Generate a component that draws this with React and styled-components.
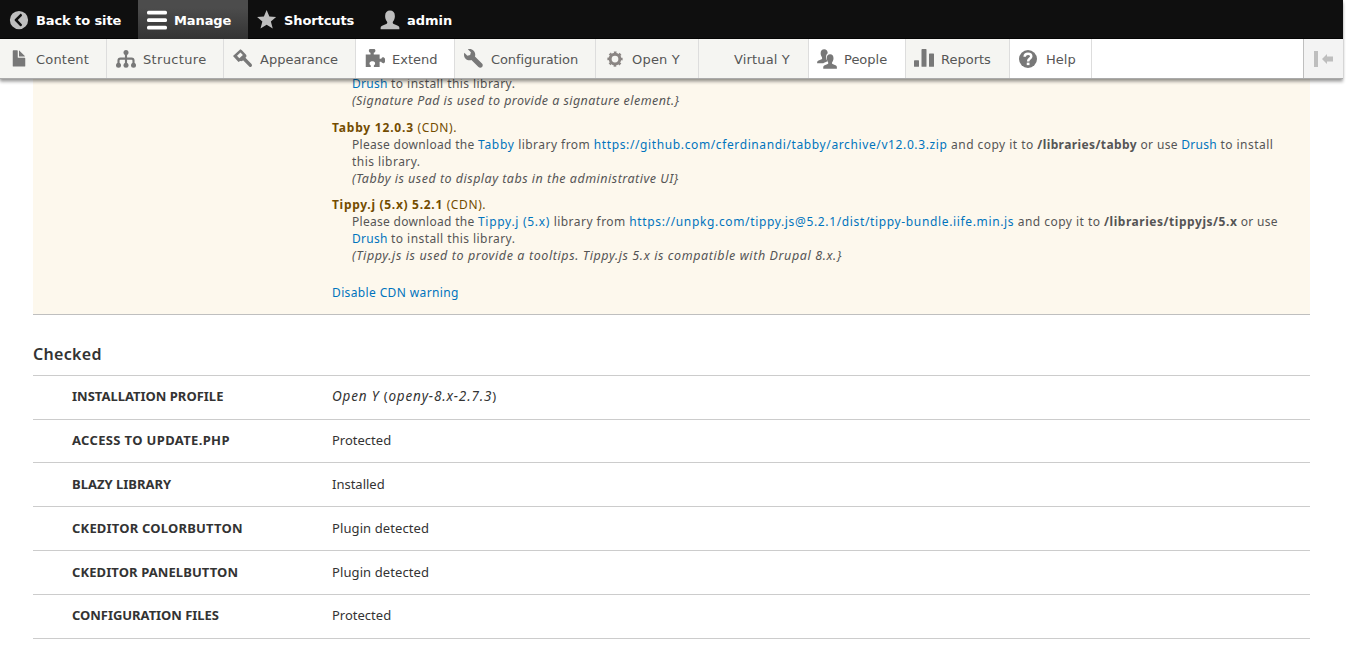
import React from 'react';
import styled, { createGlobalStyle } from 'styled-components';

const Global = createGlobalStyle`
  * { box-sizing: border-box; }
  html, body { margin: 0; height: 100%; overflow: hidden; background: #fff; }
`;

const Page = styled.div`
  width: 1343px;
  height: 654px;
  font-family: 'Noto Sans', sans-serif;
  color: #333;
`;

const Toolbar = styled.header`
  position: relative;
  z-index: 2;
  box-shadow: -1px 0 3px rgba(0, 0, 0, 0.3), 0 3px 3px rgba(0, 0, 0, 0.3);
  font: 13px/20px 'DejaVu Sans', Verdana, sans-serif;
`;

const Bar = styled.nav`
  display: flex;
  height: 39px;
  background: #0f0f0f;
  border-bottom: 1px solid #050505;
`;

const Caption = styled.span`
  padding-top: 2px;
`;

const BarTab = styled.a`
  display: flex;
  align-items: center;
  gap: 7px;
  width: ${(p) => p.$w}px;
  height: 39px;
  padding-left: 9px;
  color: #fff;
  font-weight: bold;
  letter-spacing: ${(p) => p.$ls || 0}px;
  white-space: nowrap;
  background: ${(p) => (p.$active ? 'linear-gradient(#4c4c4c 20%, #333)' : 'none')};
`;

const Tray = styled.nav`
  display: flex;
  height: 40px;
  background: #fff;
  border-bottom: 1px solid #aaa;
`;

const TrayItem = styled.a`
  display: flex;
  align-items: center;
  gap: ${(p) => p.$gap || 7}px;
  width: ${(p) => p.$w}px;
  height: 39px;
  padding-left: ${(p) => p.$pad || 9}px;
  color: #565656;
  letter-spacing: ${(p) => p.$ls || 0}px;
  white-space: nowrap;
  background: ${(p) => (p.$plain ? '#fff' : '#f5f5f2')};
  border-right: 1px solid #ddd;
`;

const Toggle = styled.button`
  display: flex;
  align-items: center;
  justify-content: center;
  width: 40px;
  height: 39px;
  margin-left: auto;
  padding: 0 2px 0 0;
  border: 0;
  border-left: 1px solid #bfbfbf;
  background: #f3f3f3;
`;

const Glyph = styled.svg`
  flex: none;
  width: 20px;
  height: 20px;
  fill: ${(p) => p.$fill || '#787878'};
`;

const Warning = styled.section`
  display: flow-root;
  height: 236px;
  margin: 0 33px;
  padding: 0 0 0 299px;
  background: #fdf8ed;
  border-bottom: 1px solid #bfbfbf;
  color: #555;
  font-size: 12px;
  line-height: 17px;
`;

const Library = styled.dl`
  margin: ${(p) => p.$top || 0}px 0 ${(p) => p.$bottom || 10}px;
`;

const LibraryName = styled.dt`
  height: 17px;
  color: #734c00;
  letter-spacing: 0.6px;
`;

const Line = styled.dd`
  height: 17px;
  margin: 0 0 0 20px;
  white-space: pre;
  letter-spacing: ${(p) => p.$ls || 0.46}px;
`;

const Note = styled(Line)`
  font-size: 12.5px;
  font-style: italic;
`;

const Strong = styled.b`
  letter-spacing: ${(p) => p.$ls}px;
`;

const Text = styled.span`
  letter-spacing: ${(p) => p.$ls}px;
`;

const Link = styled.a`
  color: #0074bd;
  letter-spacing: ${(p) => p.$ls || 0.25}px;
`;

const Action = styled.div`
  padding-top: 10px;
`;

const Checked = styled.section`
  margin: 0 33px;
  padding-top: 28px;
`;

const Heading = styled.h3`
  height: 33px;
  margin: 0;
  border-bottom: 1px solid #ccc;
  font-size: 16px;
  font-weight: 600;
  line-height: 23px;
  letter-spacing: 0.3px;
`;

const Row = styled.div`
  display: flex;
  align-items: center;
  height: ${(p) => p.$h}px;
  padding: 0 0 ${(p) => p.$lift || 2}px 39px;
  border-bottom: 1px solid #ccc;
  font-size: 13px;
  line-height: 18px;
`;

const Label = styled.div`
  width: 260px;
  font-weight: 700;
  white-space: nowrap;
  letter-spacing: ${(p) => p.$ls || 0}px;
`;

const Value = styled.div`
  white-space: nowrap;
  letter-spacing: ${(p) => p.$ls || 0}px;
  i { font-size: 13.5px; }
`;

const icons = {
  back: (
    <path d="M8 .7a7.3 7.3 0 1 0 0 14.6A7.3 7.3 0 0 0 8 .7zm2.2 10.6c.3.3.3.8 0 1.1l-.3.3c-.3.3-.8.3-1.1 0L4.7 8.5a.8.8 0 0 1 0-1.1l4.1-4.1c.3-.3.8-.3 1.1 0l.3.3c.3.3.3.8 0 1.1L7 8z" />
  ),
  menu: (
    <g>
      <rect y=".6" width="16" height="3" rx="1.2" />
      <rect y="6.5" width="16" height="3" rx="1.2" />
      <rect y="12.5" width="16" height="3" rx="1.2" />
    </g>
  ),
  star: <path d="M7.7 0l2.2 5.2 5.4.3-4.2 3.7 1.5 5.6-4.9-3-4.9 3 1.5-5.6L.1 5.5l5.4-.3z" />,
  user: (
    <path d="M15.5 14.2c0-1-1-1.7-4-2.8-.9-.3-1.4-.9-1.3-1.6.1-.6.8-1.2 1.1-2 .3-.6.6-1.6.6-3C11.9 1.9 10.4.4 8 .4S4.1 1.9 4.1 4.8c0 1.4.3 2.4.6 3 .3.8 1 1.4 1.1 2 .1.7-.4 1.3-1.3 1.6-3 1.1-4 1.8-4 2.8v1.1h15z" />
  ),
  file: (
    <path d="M12.502 7h-5c-.276 0-.502-.225-.502-.5v-5c0-.275-.225-.5-.5-.5h-3c-.275 0-.5.225-.5.5v12.029c0 .275.225.5.5.5h9c.275 0 .5-.225.5-.5v-6.029c0-.275-.225-.5-.498-.5zM8.502 6h4c.275 0 .34-.159.146-.354l-4.293-4.292c-.195-.195-.353-.129-.353.146v4c0 .275.225.5.5.5z" />
  ),
  tree: (
    <g>
      <circle cx="8" cy="2.8" r="2" />
      <circle cx="2" cy="13" r="2" />
      <circle cx="8" cy="13" r="2" />
      <circle cx="14" cy="13" r="2" />
      <path d="M8 3v10M2 12.5V9.2c0-1 .5-1.5 1.5-1.5h9c1 0 1.5.5 1.5 1.5v3.3" fill="none" stroke="#787878" strokeWidth="1.7" />
    </g>
  ),
  brush: (
    <g>
      <path fillRule="evenodd" d="M0 5.5L5.9.2l1.2.7 3.2 3.4c.7.8.6 1.6 0 2.3L7.9 9.2c-.7.6-1.5.6-2.2.4L4.4 10.3zM3.2 5.4l1.9 2 2.8-2.7-1.9-2z" />
      <path d="M8.8 7.8l5.1 5.2" fill="none" stroke="#787878" strokeWidth="2.6" strokeLinecap="round" />
    </g>
  ),
  puzzle: (
    <path d="M.6 4.3h3.8V3C3.4 2.7 2.9 2 3.1 1 3.2.3 3.7 0 4.3 0h2.8c.6 0 1.1.3 1.2 1 .2 1-.3 1.7-1.3 2v1.3h4.7v3.5h1.3c.5-1 1.3-1.3 2.1-1.1.6.2.9.7.9 1.3v2c0 .6-.3 1.1-.9 1.3-.8.2-1.6-.1-2.1-1.1h-1.3v4.1H7.1v-1.2c1-.5 1.1-1.4.9-2.1C7.7 10.2 7 9.800 5.900 9.800s-1.900.4-2.200 1.200c-.2.7-.1 1.600.9 2.100v1.200h-4z" />
  ),
  wrench: (
    <path d="M14.416 11.586l-.01-.008v-.001l-5.656-5.656c.15-.449.252-.921.252-1.421 0-2.485-2.016-4.5-4.502-4.5-.505 0-.981.102-1.434.255l2.431 2.431-.588 2.196-2.196.588-2.445-2.445c-.162.464-.268.956-.268 1.475 0 2.486 2.014 4.5 4.5 4.5.5 0 .972-.102 1.421-.251l5.667 5.665c.781.781 2.047.781 2.828 0s.781-2.047 0-2.828z" />
  ),
  gear: (
    <g fill="none" stroke="#8a8583">
      <circle cx="8" cy="8" r="3.9" strokeWidth="2.4" />
      <circle cx="8" cy="8" r="5.4" strokeWidth="1.4" strokeDasharray="2.12 2.12" strokeDashoffset="1.06" />
    </g>
  ),
  people: (
    <g>
      <path d="M8.1 9.2c-.8-1-.9-2.3-.8-3.4.1-1.1.6-1.9 1.3-2.4C8.5 1.3 7.4.2 5.8.2 4 .2 2.9 1.4 2.9 3.4c0 1 .2 1.7.5 2.2.3.6.7 1 .7 1.5.1.6-.2 1-.9 1.2C1 9.1.1 9.6.1 10.6v.8h5c.6-.6 1.5-1 2.9-1.5.3-.1.3-.4.1-.7z" />
      <path d="M15.9 14.4c0-.9-.8-1.4-3-2.2-.7-.2-1-.6-.9-1.2 0-.5.5-.9.7-1.5.3-.5.5-1.2.5-2.2 0-2-1-3.2-2.7-3.2S7.8 5.3 7.8 7.3c0 1 .2 1.7.5 2.2.2.6.7 1 .7 1.5.1.6-.2 1-.9 1.2-2.2.8-3.1 1.3-3.1 2.2v1.4h10.900z" />
    </g>
  ),
  chart: (
    <g>
      <rect y="9" width="4" height="5.2" rx=".5" />
      <rect x="6" y="0" width="4" height="14.2" rx=".5" />
      <rect x="12" y="3.5" width="4" height="10.7" rx=".5" />
    </g>
  ),
  help: (
    <g>
      <circle cx="8" cy="8" r="7.2" />
      <path d="M5.3 6.2C5.4 4.500 6.500 3.800 8 3.800c1.600 0 2.600.8 2.600 2.100C10.600 7.700 8.100 7.600 8.100 9.900" fill="none" stroke="#fff" strokeWidth="2" />
      <rect x="7" y="10.9" width="2.2" height="2" fill="#fff" />
    </g>
  ),
  none: null,
};

const Icon = ({ name, fill }) => (
  <Glyph viewBox="0 0 16 16" $fill={fill} aria-hidden="true">
    {icons[name]}
  </Glyph>
);

const tabs = [
  { label: 'Back to site', icon: 'back', w: 138, ls: -0.1 },
  { label: 'Manage', icon: 'menu', w: 110, active: true, ls: -0.1 },
  { label: 'Shortcuts', icon: 'star', w: 123, ls: -0.1 },
  { label: 'admin', icon: 'user', w: 100 },
];

const tray = [
  { label: 'Content', icon: 'file', w: 107, ls: 0.2 },
  { label: 'Structure', icon: 'tree', w: 117, ls: 0.35 },
  { label: 'Appearance', icon: 'brush', w: 132 },
  { label: 'Extend', icon: 'puzzle', w: 99, plain: true },
  { label: 'Configuration', icon: 'wrench', w: 141, ls: -0.08 },
  { label: 'Open Y', icon: 'gear', w: 103, ls: 0.2 },
  { label: 'Virtual Y', icon: 'none', w: 110, ls: 0.15, pad: 8 },
  { label: 'People', icon: 'people', w: 97, plain: true, pad: 8 },
  { label: 'Reports', icon: 'chart', w: 104, pad: 8 },
  { label: 'Help', icon: 'help', w: 82, plain: true, pad: 8, gap: 8 },
];

const rows = [
  { label: 'INSTALLATION PROFILE', value: <><i>Open Y</i> (<i>openy-8.x-2.7.3</i>)</>, h: 44, vls: 0.83, lift: 3 },
  { label: 'ACCESS TO UPDATE.PHP', value: 'Protected', h: 43, ls: 0.35 },
  { label: 'BLAZY LIBRARY', value: 'Installed', h: 44 },
  { label: 'CKEDITOR COLORBUTTON', value: 'Plugin detected', h: 44, ls: 0.2, vls: 0.1 },
  { label: 'CKEDITOR PANELBUTTON', value: 'Plugin detected', h: 44, ls: 0.1, vls: 0.1 },
  { label: 'CONFIGURATION FILES', value: 'Protected', h: 44, ls: -0.04, lift: 4 },
];

export default function App() {
  return (
    <Page>
      <Global />
      <Toolbar>
        <Bar>
          {tabs.map((t) => (
            <BarTab key={t.label} $w={t.w} $active={t.active} $ls={t.ls}>
              <Icon name={t.icon} fill={t.active ? '#fff' : '#bebebe'} />
              <Caption>{t.label}</Caption>
            </BarTab>
          ))}
        </Bar>
        <Tray>
          {tray.map((t) => (
            <TrayItem key={t.label} $w={t.w} $plain={t.plain} $ls={t.ls} $pad={t.pad} $gap={t.gap}>
              <Icon name={t.icon} />
              <Caption>{t.label}</Caption>
            </TrayItem>
          ))}
          <Toggle aria-label="Vertical orientation">
            <Glyph viewBox="0 0 20 20" $fill="#bebebe">
              <path d="M1 2h4v16H1zM9 10l5-5v2.500h6v5h-6V15z" />
            </Glyph>
          </Toggle>
        </Tray>
      </Toolbar>
      <Warning>
        <Library $top={-4}>
          <Line $ls={0.43}><Link>Drush</Link> to install this library.</Line>
          <Note $ls={0.44}>{'(Signature Pad is used to provide a signature element.}'}</Note>
        </Library>
        <Library $bottom={9}>
          <LibraryName><Strong $ls={0.8}>Tabby 12.0.3</Strong> (CDN).</LibraryName>
          <Line>
            <Text $ls={0.3}>Please download the </Text><Link $ls={0.7}>Tabby</Link> library from <Link $ls={0.616}>https://github.com/cferdinandi/tabby/archive/v12.0.3.zip</Link> and copy it to <Strong $ls={0.4}>/libraries/tabby</Strong><Text $ls={0.35}> or use </Text><Link>Drush</Link> to install
          </Line>
          <Line>this library.</Line>
          <Note $ls={0.49}>{'(Tabby is used to display tabs in the administrative UI}'}</Note>
        </Library>
        <Library>
          <LibraryName><Strong $ls={0.7}>Tippy.j (5.x) 5.2.1</Strong> (CDN).</LibraryName>
          <Line>
            <Text $ls={0.3}>Please download the </Text><Link $ls={0.7}>Tippy.j (5.x)</Link> library from <Link $ls={0.645}>https://unpkg.com/tippy.js@5.2.1/dist/tippy-bundle.iife.min.js</Link> and copy it to <Strong $ls={0.54}>/libraries/tippyjs/5.x</Strong><Text $ls={0.3}> or use</Text>
          </Line>
          <Line $ls={0.43}><Link>Drush</Link> to install this library.</Line>
          <Note $ls={0.6}>{'(Tippy.js is used to provide a tooltips. Tippy.js 5.x is compatible with Drupal 8.x.}'}</Note>
        </Library>
        <Action><Link $ls={0.37}>Disable CDN warning</Link></Action>
      </Warning>
      <Checked>
        <Heading>Checked</Heading>
        {rows.map((r) => (
          <Row key={r.label} $h={r.h} $lift={r.lift}>
            <Label $ls={r.ls}>{r.label}</Label>
            <Value $ls={r.vls}>{r.value}</Value>
          </Row>
        ))}
      </Checked>
    </Page>
  );
}
